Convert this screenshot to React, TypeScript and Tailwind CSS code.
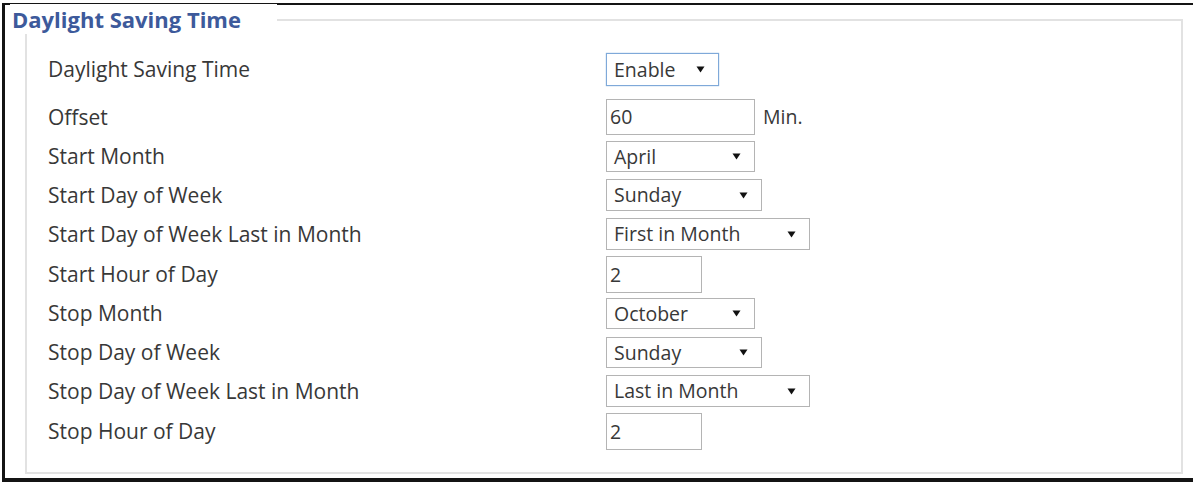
import React from "react";

const font = { fontFamily: '"Open Sans", "Noto Sans", sans-serif' };

function Arrow() {
  return (
    <svg width="9" height="7" viewBox="0 0 9 7" className="shrink-0">
      <path d="M0.5 0.5 L8.5 0.5 L4.5 6.5 Z" fill="#111" />
    </svg>
  );
}

function Select({ value, w, focus = false }: { value: string; w: string; focus?: boolean }) {
  return (
    <div
      className={`${w} h-full flex items-center justify-between pl-[7px] pr-[13px] border bg-white text-[19.5px] text-[#383838] ${
        focus ? "border-[#7fa9d9] shadow-[0_0_1px_#7fa9d9]" : "border-[#b4b4b4]"
      }`}
    >
      <span>{value}</span>
      <Arrow />
    </div>
  );
}

function Input({ value, w }: { value: string; w: string }) {
  return (
    <div className={`${w} h-full flex items-center pl-[3px] border border-[#b4b4b4] bg-white text-[19.5px] text-[#383838]`}>
      {value}
    </div>
  );
}

function Row({ label, mt, h, children }: { label: string; mt: string; h: string; children: React.ReactNode }) {
  return (
    <div className={`flex items-center ${mt} ${h}`}>
      <div className="w-[558px] text-[21px] text-[#383838] leading-none">{label}</div>
      <div className="flex items-center h-full">{children}</div>
    </div>
  );
}

export default function App() {
  return (
    <div className="w-[1193px] h-[482px] bg-white pt-[3px] pl-[2px] overflow-hidden" style={font}>
      <div className="relative h-[479px] border-t-2 border-l-[3px] border-b-4 border-[#141414]">
        <div className="relative ml-[20px] mt-[14px] w-[1158px] h-[455px] border-2 border-[#e2e2e2] pl-[21px] pt-[32px]">
          <div className="absolute left-[-17px] top-[-17px] w-[267px] h-[30px] bg-white flex items-center pl-[2px] text-[22px] font-bold text-[#3d5a9b] leading-none">
            Daylight Saving Time
          </div>
          <Row label="Daylight Saving Time" mt="mt-0" h="h-[33px]">
            <Select value="Enable" w="w-[113px]" focus />
          </Row>
          <Row label="Offset" mt="mt-[13px]" h="h-[36px]">
            <Input value="60" w="w-[149px]" />
            <span className="ml-[8px] text-[19.5px] text-[#383838]">Min.</span>
          </Row>
          <Row label="Start Month" mt="mt-[6px]" h="h-[31px]">
            <Select value="April" w="w-[149px]" />
          </Row>
          <Row label="Start Day of Week" mt="mt-[7px]" h="h-[32px]">
            <Select value="Sunday" w="w-[156px]" />
          </Row>
          <Row label="Start Day of Week Last in Month" mt="mt-[7px]" h="h-[32px]">
            <Select value="First in Month" w="w-[204px]" />
          </Row>
          <Row label="Start Hour of Day" mt="mt-[6px]" h="h-[37px]">
            <Input value="2" w="w-[96px]" />
          </Row>
          <Row label="Stop Month" mt="mt-[5px]" h="h-[31px]">
            <Select value="October" w="w-[149px]" />
          </Row>
          <Row label="Stop Day of Week" mt="mt-[8px]" h="h-[31px]">
            <Select value="Sunday" w="w-[156px]" />
          </Row>
          <Row label="Stop Day of Week Last in Month" mt="mt-[7px]" h="h-[32px]">
            <Select value="Last in Month" w="w-[204px]" />
          </Row>
          <Row label="Stop Hour of Day" mt="mt-[6px]" h="h-[37px]">
            <Input value="2" w="w-[96px]" />
          </Row>
        </div>
      </div>
    </div>
  );
}
